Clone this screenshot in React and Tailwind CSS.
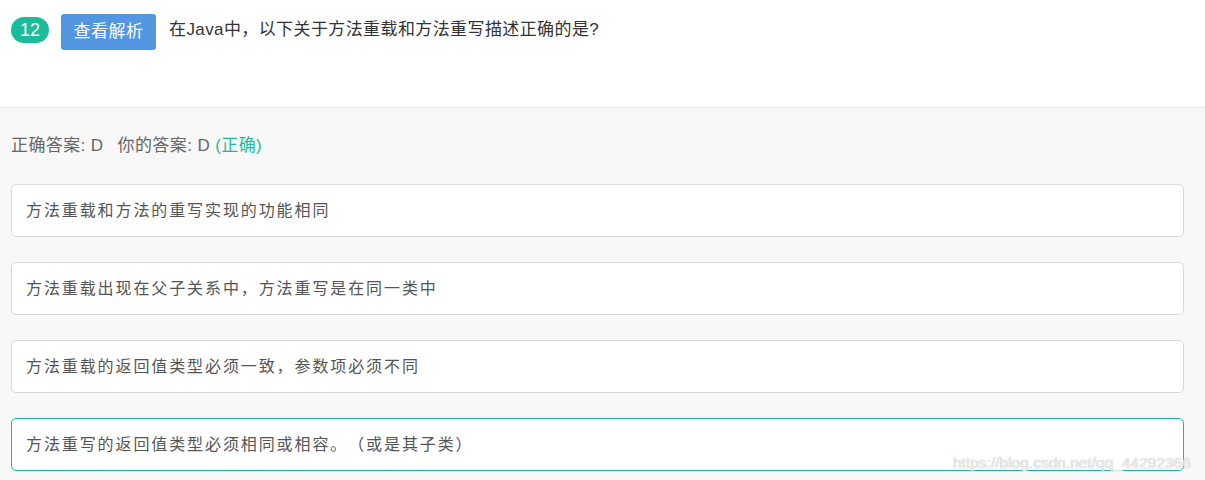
const FONT = { fontFamily: '"Liberation Sans", "Noto Sans CJK SC", sans-serif' }

const OPTIONS = [
  { text: '方法重载和方法的重写实现的功能相同', chosen: false },
  { text: '方法重载出现在父子关系中，方法重写是在同一类中', chosen: false },
  { text: '方法重载的返回值类型必须一致，参数项必须不同', chosen: false },
  { text: '方法重写的返回值类型必须相同或相容。（或是其子类）', chosen: true },
]

export default function App() {
  return (
    <div className="relative w-[1205px] h-[480px] overflow-hidden bg-[#f8f8f8] [text-spacing-trim:space-all]" style={FONT}>
      <div className="h-[108px] bg-white border-b border-[#e8e8e8] flex items-start pl-[11px] pt-[14px]">
        <span className="mt-[3px] w-[38px] h-[26px] rounded-full bg-[#1abc9c] text-white text-[18px] flex items-center justify-center">
          12
        </span>
        <button className="ml-[12px] w-[95px] h-[36px] rounded-[3px] bg-[#5296e1] text-white text-[17px] tracking-[0.5px] flex items-center justify-center">
          查看解析
        </button>
        <p className="ml-[13px] h-[32px] leading-[32px] text-[17px] tracking-[0.4px] text-[#333]">
          在Java中，以下关于方法重载和方法重写描述正确的是?
        </p>
      </div>

      <div className="px-[11px]">
        <p className="mt-[25px] h-[26px] leading-[26px] text-[17px] tracking-[0.4px] text-[#666]">
          正确答案: D<span className="inline-block w-[14px]" />你的答案: D <span className="text-[#1abc9c]">(正确)</span>
        </p>

        <div className="mt-[25px] flex flex-col gap-[25px] w-[1173px]">
          {OPTIONS.map(o => (
            <div
              key={o.text}
              className={
                'h-[53px] rounded-[5px] bg-white border flex items-center pl-[14px] text-[16px] tracking-[1.9px] text-[#555] ' +
                (o.chosen ? 'border-[#1abc9c]' : 'border-[#d9d9d9]')
              }
            >
              {o.text}
            </div>
          ))}
        </div>
      </div>

      <span className="absolute left-[953px] top-[451px] text-[15.5px] text-white/80 [text-shadow:0_0_1px_#999]">
        https://blog.csdn.net/qq_44292366
      </span>
    </div>
  )
}
